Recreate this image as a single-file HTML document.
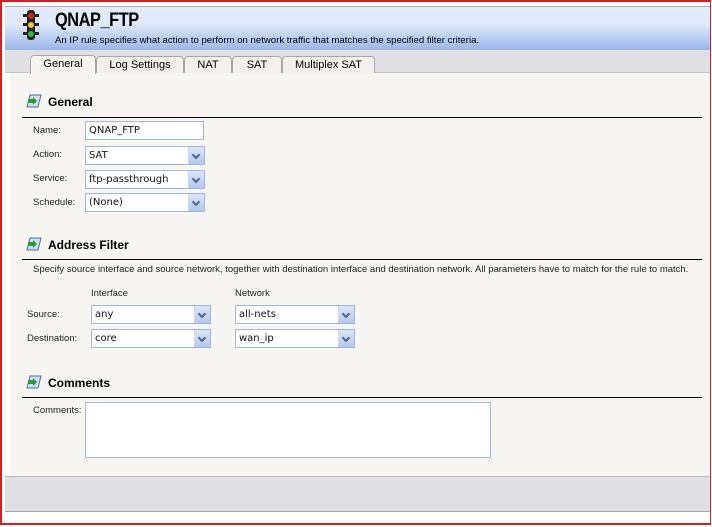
<!DOCTYPE html>
<html><head><style>
*{box-sizing:border-box;margin:0;padding:0}
body{width:712px;height:527px;background:#fff;font-family:"Liberation Sans",Arial,sans-serif;font-size:9px;color:#000;position:relative;overflow:hidden}
.abs{position:absolute}
.frame{left:0;top:0;width:711px;height:525px;border:2px solid #d42020;border-right:1px solid #d42020}
.hdr{left:5px;top:6px;width:705px;height:44px;background:linear-gradient(#e4ecfb,#dfe9fb 40%,#98b8ea);border-top:1px solid #9eb4dc}
.band{left:5px;top:50px;width:705px;height:23px;background:#e0dfe3;border-bottom:1px solid #c6c5c9}
.panel{left:10px;top:73px;width:700px;height:403px;background:#f6f5f2}
.foot{left:5px;top:476px;width:705px;height:36px;background:#e0dfe3;border-top:1px solid #bdbcc0;border-bottom:1px solid #a6a5aa}
.tab{top:56px;height:17px;background:#f1f0ec;border:1px solid #a9a9a4;border-bottom:none;border-radius:4px 4px 0 0;font-size:11px;text-align:center;line-height:16px}
.sec{font-size:12px;font-weight:bold;left:48px}
.line{left:22px;width:680px;height:1px;background:#000}
.lbl{font-size:9.5px;color:#222}
.inp{background:#fff;border:1px solid #9fb7d9;font-family:"DejaVu Sans",sans-serif;font-size:10px;padding:3px 0 0 3px;height:19px;color:#111}
.arr{position:absolute;right:0;top:0;width:16px;height:17px;background:linear-gradient(#dce6f8,#b4c8ee);border-left:1px solid #c9d6ee}
.arr:after{content:"";position:absolute;left:4px;top:5px;width:4px;height:4px;border-right:2px solid #4a6596;border-bottom:2px solid #4a6596;transform:rotate(45deg)}
.ico{width:16px;height:14px;left:26px}
</style></head><body>
<div class="abs hdr"></div>
<div class="abs band"></div>
<div class="abs panel"></div>
<div class="abs foot"></div>
<div class="abs frame"></div>
<svg class="abs" style="left:23px;top:10px" width="16" height="30"><rect x="4" y="0" width="8" height="30" rx="3" fill="#222"/><rect x="0" y="4" width="16" height="3" fill="#222"/><rect x="0" y="13" width="16" height="3" fill="#222"/><rect x="0" y="22" width="16" height="3" fill="#222"/><circle cx="8" cy="6" r="3" fill="#d22"/><circle cx="8" cy="15" r="3" fill="#ec3"/><circle cx="8" cy="24" r="3" fill="#3b3"/></svg>
<div class="abs" style="left:55px;top:10px;font-size:19px;font-weight:bold;letter-spacing:-0.5px;transform:scaleX(0.86);transform-origin:left">QNAP_FTP</div>
<div class="abs" style="left:55px;top:35px;font-size:9.6px">An IP rule specifies what action to perform on network traffic that matches the specified filter criteria.</div>
<div class="abs tab" style="left:30px;width:66px;background:#f6f5f2;top:55px;height:19px">General</div>
<div class="abs tab" style="left:96px;width:88px">Log Settings</div>
<div class="abs tab" style="left:184px;width:48px">NAT</div>
<div class="abs tab" style="left:232px;width:50px">SAT</div>
<div class="abs tab" style="left:282px;width:93px">Multiplex SAT</div>

<svg class="abs ico" style="top:94px" viewBox="0 0 16 14"><path d="M4 1h11l-3 12H1z" fill="#cfe0f5" stroke="#4a6fae"/><path d="M2 5h5V3l4 4-4 4V9H2z" fill="#2a9a2a"/></svg>
<div class="abs sec" style="top:95px">General</div>
<div class="abs line" style="top:117px"></div>
<div class="abs lbl" style="left:33px;top:125px">Name:</div>
<div class="abs inp" style="left:85px;top:121px;width:119px">QNAP_FTP</div>
<div class="abs lbl" style="left:33px;top:149px">Action:</div>
<div class="abs inp" style="left:85px;top:146px;width:120px">SAT<span class="arr"></span></div>
<div class="abs lbl" style="left:33px;top:173px">Service:</div>
<div class="abs inp" style="left:85px;top:170px;width:120px">ftp-passthrough<span class="arr"></span></div>
<div class="abs lbl" style="left:33px;top:197px">Schedule:</div>
<div class="abs inp" style="left:85px;top:193px;width:120px">(None)<span class="arr"></span></div>

<svg class="abs ico" style="top:237px" viewBox="0 0 16 14"><path d="M4 1h11l-3 12H1z" fill="#cfe0f5" stroke="#4a6fae"/><path d="M2 5h5V3l4 4-4 4V9H2z" fill="#2a9a2a"/></svg>
<div class="abs sec" style="top:238px">Address Filter</div>
<div class="abs line" style="top:259px"></div>
<div class="abs lbl" style="left:33px;top:264px">Specify source interface and source network, together with destination interface and destination network. All parameters have to match for the rule to match.</div>
<div class="abs lbl" style="left:91px;top:288px">Interface</div>
<div class="abs lbl" style="left:235px;top:288px">Network</div>
<div class="abs lbl" style="left:27px;top:309px">Source:</div>
<div class="abs inp" style="left:91px;top:305px;width:120px">any<span class="arr"></span></div>
<div class="abs inp" style="left:235px;top:305px;width:120px">all-nets<span class="arr"></span></div>
<div class="abs lbl" style="left:27px;top:333px">Destination:</div>
<div class="abs inp" style="left:91px;top:329px;width:120px">core<span class="arr"></span></div>
<div class="abs inp" style="left:235px;top:329px;width:120px">wan_ip<span class="arr"></span></div>

<svg class="abs ico" style="top:375px" viewBox="0 0 16 14"><path d="M4 1h11l-3 12H1z" fill="#cfe0f5" stroke="#4a6fae"/><path d="M2 5h5V3l4 4-4 4V9H2z" fill="#2a9a2a"/></svg>
<div class="abs sec" style="top:376px">Comments</div>
<div class="abs line" style="top:397px"></div>
<div class="abs lbl" style="left:33px;top:405px">Comments:</div>
<div class="abs" style="left:85px;top:402px;width:406px;height:56px;background:#fff;border:1px solid #9fb7d9"></div>
</body></html>
